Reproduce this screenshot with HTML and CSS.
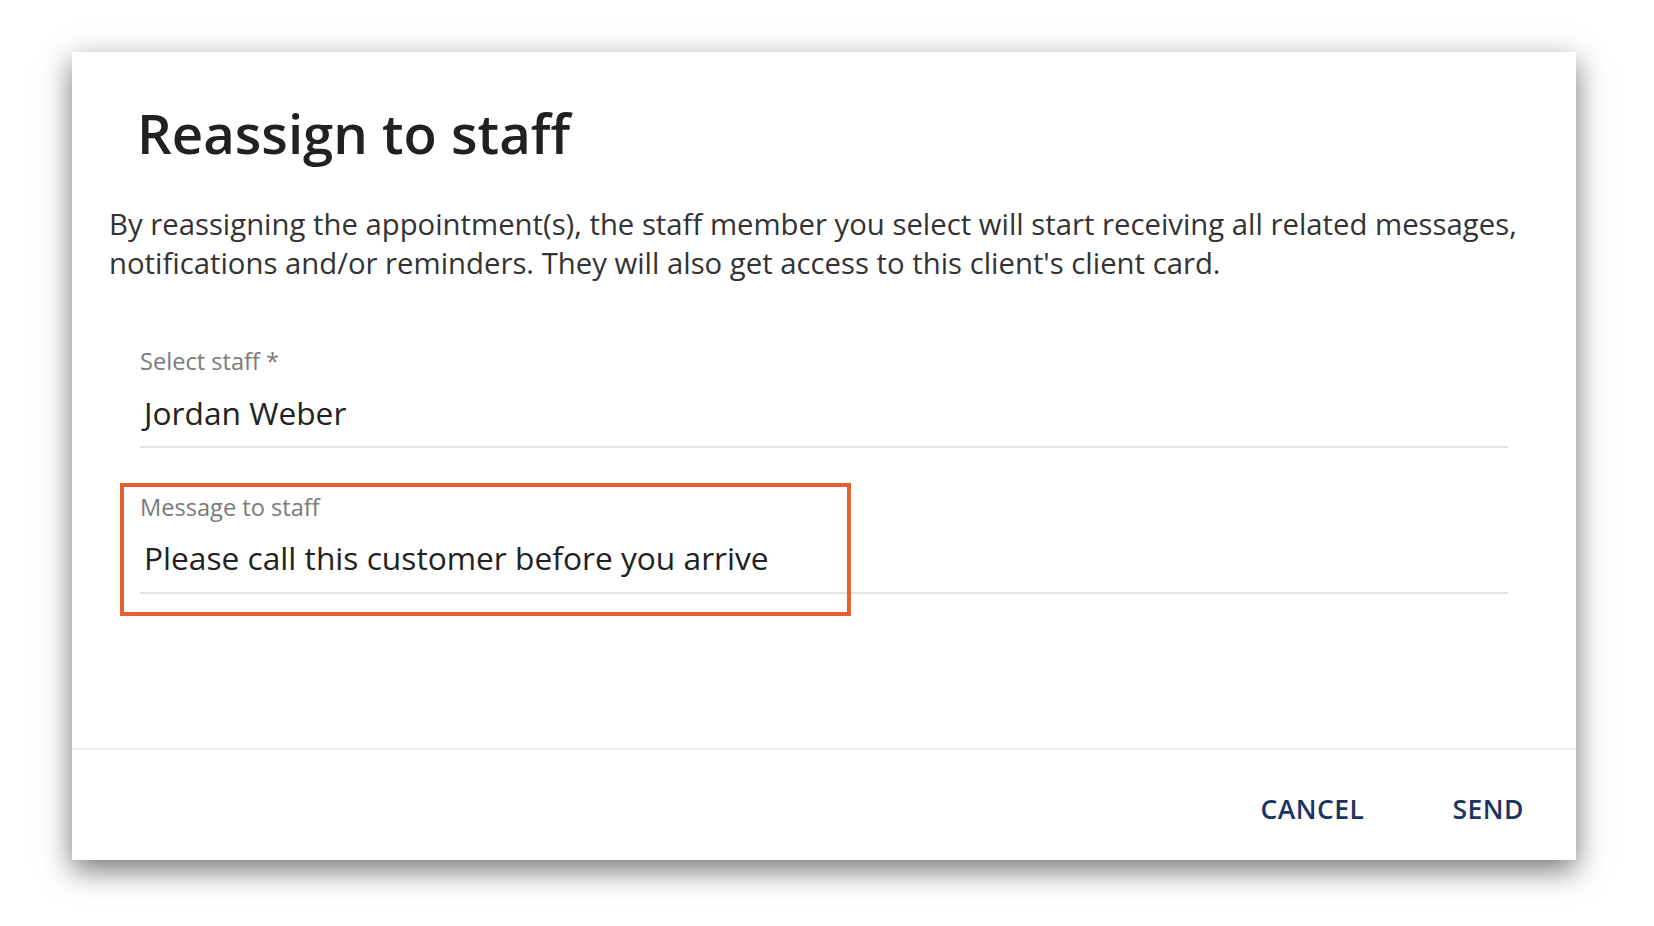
FILE: index.html
```html
<!DOCTYPE html>
<html lang="en">
<head>
    <meta charset="UTF-8">
    <meta name="viewport" content="width=device-width, initial-scale=1.0">
    <title>Reassign to staff</title>
    <link rel="stylesheet" href="styles.css">
</head>
<body>
    <div class="dialog">
        <div class="dialog-body">
            <h2 class="title">Reassign to staff</h2>
            <p class="intro">By reassigning the appointment(s), the staff member you select will start receiving all related messages, notifications and/or reminders. They will also get access to this client's client card.</p>

            <div class="field">
                <label class="field-label">Select staff *</label>
                <div class="field-value">Jordan Weber</div>
            </div>

            <div class="field field-message">
                <label class="field-label">Message to staff</label>
                <div class="field-value">Please call this customer before you arrive</div>
                <div class="highlight"></div>
            </div>
        </div>

        <div class="dialog-actions">
            <button class="action">CANCEL</button>
            <button class="action">SEND</button>
        </div>
    </div>
</body>
</html>
```

FILE: styles.css
```css
body {
    font-family: "Open Sans", Arial, sans-serif;
    background-color: #fff;
    margin: 0;
    padding: 52px 0 0 72px;
    min-height: 926px;
    box-sizing: border-box;
}

.dialog {
    background-color: #fff;
    width: 1504px;
    height: 808px;
    display: flex;
    flex-direction: column;
    box-shadow: 0 10px 28px rgba(0, 0, 0, 0.55);
}

.dialog-body {
    flex: 1;
    padding: 50px 24px 0 37px;
}

.title {
    margin: 0 0 41px 28px;
    font-size: 54.5px;
    line-height: 62px;
    font-weight: 600;
    color: #212121;
}

.intro {
    margin: 0 0 64px 0;
    font-size: 29.3px;
    line-height: 39px;
    color: #333;
}

.field {
    margin: 0 44px 0 31px;
    border-bottom: 2px solid #e3e3e3;
}

.field + .field {
    margin-top: 45px;
}

.field-label {
    display: block;
    font-size: 23.6px;
    line-height: 28px;
    color: #7a7a7a;
}

.field-value {
    margin-top: 18px;
    padding: 0 0 13px 4px;
    font-size: 31.7px;
    line-height: 40px;
    color: #222;
}

.field-message {
    position: relative;
}

.field-message .field-value {
    margin-top: 17px;
    padding-bottom: 14px;
}

.highlight {
    position: absolute;
    left: -20px;
    top: -10px;
    width: 723px;
    height: 125px;
    border: 4px solid #e4602e;
}

.dialog-actions {
    height: 112px;
    border-top: 2px solid #ececec;
    display: flex;
    justify-content: flex-end;
    align-items: center;
    gap: 88px;
    padding: 8px 52px 0 0;
    box-sizing: border-box;
}

.action {
    background: none;
    border: none;
    padding: 0;
    font-family: "Open Sans", Arial, sans-serif;
    font-size: 26.5px;
    font-weight: 600;
    letter-spacing: 0.5px;
    color: #1c3461;
    cursor: pointer;
}
```
